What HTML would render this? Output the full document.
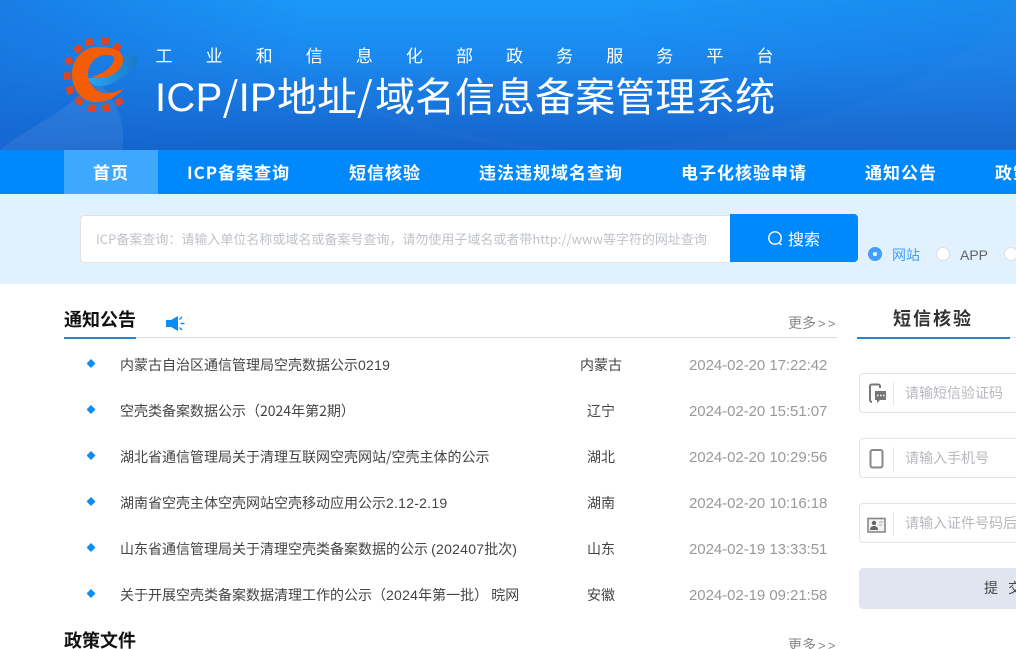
<!DOCTYPE html>
<html lang="zh"><head><meta charset="utf-8"><title>ICP/IP地址/域名信息备案管理系统</title>
<style>
*{margin:0;padding:0;box-sizing:border-box}
html,body{width:1016px;height:649px;overflow:hidden;background:#fff}
body{position:relative;font-family:"Noto Sans CJK SC","Liberation Sans",sans-serif;color:#333}
.a{position:absolute;white-space:nowrap}
.hd{left:0;top:0;width:1016px;height:150px;background:linear-gradient(90deg,rgba(22,105,215,.55) 0,rgba(22,105,215,0) 30%,rgba(22,105,215,0) 60%,rgba(22,105,215,.3) 100%),linear-gradient(180deg,#1a98f8 0%,#1a88ee 40%,#1662ca 100%);overflow:hidden}
.nav{left:0;top:150px;width:1016px;height:44px;background:#0089ff;overflow:hidden}
.nav .a{top:0;line-height:43px;font-size:17px;font-weight:700;color:#fff;letter-spacing:1px}
.sb{left:0;top:194px;width:1016px;height:90px;background:#e2f1fe}
.t{font-size:14px;line-height:20px;color:#444}
.t span{font-family:"Liberation Sans",sans-serif;letter-spacing:.25px}
.d{width:9px;height:9px;left:86.500px;background:#0e8cf5;clip-path:polygon(50% 0,100% 50%,50% 100%,0 50%)}
.dt{left:689px;width:140px;font-family:"Liberation Sans",sans-serif;font-size:15px;letter-spacing:-.05px;line-height:20px;color:#999;margin-top:1px}
.pr{left:561px;width:80px;text-align:center;font-size:14px;line-height:20px;color:#444}
.ip{left:859px;width:157px;height:40px;border:1px solid #e1e3e6;border-right:0;border-radius:4px 0 0 4px;background:#fff;overflow:hidden}
.sep{position:absolute;left:33px;top:8px;width:1px;height:24px;background:#e4e6e9}
.ph{position:absolute;left:45px;top:9px;font-size:14px;line-height:20px;color:#b5b8bd;white-space:nowrap}
.more{left:788px;font-size:14px;line-height:20px;color:#888}
.more span{font-family:"Liberation Sans",sans-serif;font-size:13px;letter-spacing:2.300px;margin-left:2px}
.l{font-family:"Liberation Sans",sans-serif;letter-spacing:.3px}
</style></head><body>
<div class="a hd">
<svg width="1016" height="150" style="position:absolute;left:0;top:0">
<defs><linearGradient id="b" x1="0" y1="0" x2="1" y2="0"><stop offset="0" stop-color="#2aa6ee"/><stop offset="1" stop-color="#1a78cc"/></linearGradient></defs>
<path d="M0 150C30 125 70 112 95 78C112 95 128 118 122 150Z" fill="#fff" opacity=".07"/>
<path d="M160 0C260 60 400 150 560 150C760 150 960 90 1016 0H1016V150H600C420 150 280 70 160 0Z" fill="#fff" opacity=".02"/>
<g fill="#e0441c">
<rect x="85.500" y="38.500" width="7.500" height="7" transform="rotate(-10 89 42)"/>
<rect x="101.500" y="37.500" width="7.500" height="7" transform="rotate(10 105 41)"/>
<rect x="113.500" y="43.500" width="7.500" height="7" transform="rotate(30 117 47)"/>
<rect x="74.500" y="45.500" width="7.500" height="7" transform="rotate(-35 78 49)"/>
<rect x="65.500" y="57.500" width="7" height="7" transform="rotate(-20 69 61)"/>
<rect x="64" y="72.500" width="6.500" height="7.500"/>
<rect x="66.500" y="86.500" width="7" height="7.500" transform="rotate(-20 70 90)"/>
<rect x="75.500" y="97.500" width="7.500" height="7" transform="rotate(35 79 101)"/>
<rect x="88.500" y="104.500" width="7.500" height="7" transform="rotate(8 92 108)"/>
<rect x="102.500" y="104.500" width="7.500" height="7" transform="rotate(-10 106 108)"/>
<rect x="115.500" y="98.500" width="7.500" height="7" transform="rotate(-30 119 102)"/>
</g>
<path d="M88 78C92 90 108 87 118 80C128 74 138 68 138 60C137 55 128 54 123 55C125 65 108 78 88 78Z" fill="url(#b)"/>
<path d="M124 88C116 98 106 102 96 102C82 102 72 90 72 74C72 58 84 47 98 47C112 47 124 50 123 61C122 72 105 82 91 76C100 76 112 68 114 60C115 55 110 55 106 55C96 55 88 64 88 74C88 84 96 93 106 93C113 93 119 91 124 88Z" fill="#f35d06"/>
</svg>
</div>
<div class="a" style="left:155.500px;top:43px;font-size:17px;line-height:24px;color:#fff;letter-spacing:33.080px;width:660px;overflow:hidden">工业和信息化部政务服务平台</div>
<div class="a" style="left:155px;top:65px;font-size:40px;line-height:58px;color:#fff"><span class="l">ICP</span><span style="letter-spacing:.3px">/</span><span class="l">IP</span>地址<span style="letter-spacing:2.500px">/</span>域名信息备案管理系统</div>
<div class="a nav">
<div class="a" style="left:64px;width:94px;height:44px;background:#3ea8ff"></div>
<div class="a" style="left:93px">首页</div>
<div class="a" style="left:187px">ICP备案查询</div>
<div class="a" style="left:349px">短信核验</div>
<div class="a" style="left:479px">违法违规域名查询</div>
<div class="a" style="left:681px">电子化核验申请</div>
<div class="a" style="left:865px">通知公告</div>
<div class="a" style="left:995px;width:21px;overflow:hidden">政策文件</div>
</div>
<div class="a sb"></div>
<div class="a" style="left:80px;top:215px;width:652px;height:48px;background:#fff;border:1px solid #dfe3e8;border-radius:4px 0 0 4px"></div>
<div class="a" style="left:96px;top:229px;font-size:13px;line-height:20px;color:#bfc3c8">ICP备案查询：请输入单位名称或域名或备案号查询，请勿使用子域名或者带http://www等字符的网址查询</div>
<div class="a" style="left:730px;top:214px;width:128px;height:48px;background:#0089ff;border-radius:0 4px 4px 0"></div>
<svg class="a" style="left:767px;top:230px" width="17" height="17" viewBox="0 0 17 17"><circle cx="8" cy="8" r="6.200" fill="none" stroke="#fff" stroke-width="1.400"/><path d="M12 12.500L14.500 15" stroke="#fff" stroke-width="1.400"/></svg>
<div class="a" style="left:788px;top:226px;font-size:16px;line-height:24px;color:#fff">搜索</div>
<div class="a" style="left:868px;top:247px;width:14px;height:14px;border-radius:50%;background:#409eff"></div>
<div class="a" style="left:873px;top:252px;width:4px;height:4px;border-radius:50%;background:#fff"></div>
<div class="a" style="left:892px;top:245px;font-size:14px;line-height:20px;color:#409eff">网站</div>
<div class="a" style="left:936px;top:247px;width:14px;height:14px;border-radius:50%;background:#fff;border:1px solid #dcdfe6"></div>
<div class="a" style="left:960px;top:245px;font-family:'Liberation Sans',sans-serif;font-size:14px;line-height:20px;color:#606266">APP</div>
<div class="a" style="left:1004px;top:247px;width:12px;height:14px;overflow:hidden"><div style="width:14px;height:14px;border-radius:50%;background:#fff;border:1px solid #dcdfe6"></div></div>

<div class="a" style="left:64px;top:307px;font-size:18px;line-height:24px;font-weight:700;color:#111">通知公告</div>
<div class="a" style="left:64px;top:337px;width:773px;height:1px;background:#dcdcdc"></div>
<div class="a" style="left:64px;top:337px;width:72px;height:2px;background:#2a82d0"></div>
<svg class="a" style="left:165px;top:315px" width="20" height="17" viewBox="0 0 20 17"><path d="M1 5H6L13 1V16L6 12H1Z" fill="#0e8cf5"/><path d="M14.500 4.500L17 2M15.500 8.500H19.500M14.500 12.500L17 15" stroke="#0e8cf5" stroke-width="1.400" fill="none"/></svg>
<div class="a more" style="top:313px">更多<span>&gt;&gt;</span></div>

<div class="a d" style="top:359px"></div><div class="a t" style="left:120px;top:355px">内蒙古自治区通信管理局空壳数据公示<span>0219</span></div><div class="a pr" style="top:355px">内蒙古</div><div class="a dt" style="top:355px">2024-02-20 17:22:42</div>
<div class="a d" style="top:405px"></div><div class="a t" style="left:120px;top:401px">空壳类备案数据公示（2024年第2期）</div><div class="a pr" style="top:401px">辽宁</div><div class="a dt" style="top:401px">2024-02-20 15:51:07</div>
<div class="a d" style="top:451px"></div><div class="a t" style="left:120px;top:447px">湖北省通信管理局关于清理互联网空壳网站/空壳主体的公示</div><div class="a pr" style="top:447px">湖北</div><div class="a dt" style="top:447px">2024-02-20 10:29:56</div>
<div class="a d" style="top:497px"></div><div class="a t" style="left:120px;top:493px">湖南省空壳主体空壳网站空壳移动应用公示<span>2.12-2.19</span></div><div class="a pr" style="top:493px">湖南</div><div class="a dt" style="top:493px">2024-02-20 10:16:18</div>
<div class="a d" style="top:543px"></div><div class="a t" style="left:120px;top:539px">山东省通信管理局关于清理空壳类备案数据的公示 <span>(202407</span>批次<span>)</span></div><div class="a pr" style="top:539px">山东</div><div class="a dt" style="top:539px">2024-02-19 13:33:51</div>
<div class="a d" style="top:589px"></div><div class="a t" style="left:120px;top:585px">关于开展空壳类备案数据清理工作的公示（<span>2024</span>年第一批） 晥网</div><div class="a pr" style="top:585px">安徽</div><div class="a dt" style="top:585px">2024-02-19 09:21:58</div>

<div class="a" style="left:64px;top:631px;font-size:18px;line-height:18px;height:18px;overflow:hidden;font-weight:700;color:#111">政策文件</div>
<div class="a more" style="top:629px;height:20px;overflow:hidden"><div style="padding-top:6px">更多<span>&gt;&gt;</span></div></div>

<div class="a" style="left:893px;top:306px;font-size:18px;line-height:24px;font-weight:700;color:#333;letter-spacing:2px">短信核验</div>
<div class="a" style="left:857px;top:337px;width:153px;height:2px;background:#2a82d0"></div>
<div class="a" style="left:1010px;top:337px;width:6px;height:1px;background:#e3e3e3"></div>

<div class="a ip" style="top:373px"><div class="sep"></div><div class="ph">请输短信验证码</div>
<svg style="position:absolute;left:8px;top:9px" width="20" height="22" viewBox="0 0 20 22"><path d="M2 17V3C2 2 3 1.500 4 1.500H10C11 1.500 12 2 12 3V5" fill="none" stroke="#777" stroke-width="2"/><path d="M2 17C2 18 3 19 4 19" fill="none" stroke="#777" stroke-width="2"/><path d="M7 8H18V17H12L9 20V17H7Z" fill="#777"/><path d="M9 12.500H10.500M12 12.500H13.500M15 12.500H16.500" stroke="#fff" stroke-width="1.400"/></svg></div>
<div class="a ip" style="top:438px"><div class="sep"></div><div class="ph">请输入手机号</div>
<svg style="position:absolute;left:8px;top:9px" width="18" height="22" viewBox="0 0 18 22"><rect x="2.500" y="2" width="12" height="17.500" rx="2" fill="none" stroke="#888" stroke-width="2"/></svg></div>
<div class="a ip" style="top:503px"><div class="sep"></div><div class="ph" style="width:111px;overflow:hidden">请输入证件号码后</div>
<svg style="position:absolute;left:7px;top:13px" width="20" height="17" viewBox="0 0 20 17"><rect x="1" y="1.500" width="17" height="13.500" fill="#f2f2f2" stroke="#888" stroke-width="1.600"/><circle cx="7" cy="6" r="2.200" fill="#666"/><path d="M3 13C3 10 5 9 7 9C9 9 11 10 11 13Z" fill="#666"/><path d="M12 5H16M12 8H15" stroke="#aaa"/></svg></div>
<div class="a" style="left:859px;top:568px;width:157px;height:41px;background:#e1e5ef;border-radius:4px 0 0 4px"></div>
<div class="a" style="left:984px;top:578px;width:32px;overflow:hidden;font-size:14px;line-height:20px;color:#444;letter-spacing:10px">提交</div>
</body></html>
